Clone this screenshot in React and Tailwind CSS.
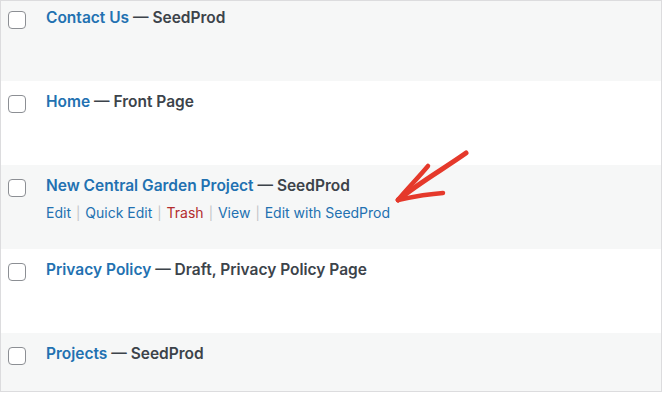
import React from "react";

// WordPress "Pages" list rows with a hand-drawn arrow pointing at the row actions

const rows = [
  { title: "Contact Us", state: "SeedProd", first: true },
  { title: "Home", state: "Front Page" },
  { title: "New Central Garden Project", state: "SeedProd", actions: true },
  { title: "Privacy Policy", state: "Draft, Privacy Policy Page" },
  { title: "Projects", state: "SeedProd", last: true },
];

function Sep() {
  return <span className="text-[#c3c4c7] text-[13px] mx-[5px]">|</span>;
}

function Row({ row, index }) {
  const bg = index % 2 === 0 ? "bg-[#f6f7f7]" : "bg-white";
  const height = row.first ? "h-[80px]" : row.last ? "h-[58px]" : "h-[84px]";
  const pad = row.first ? "pt-[7px]" : "pt-[11px]";
  return (
    <div className={`${bg} ${height} ${pad} flex`}>
      <div className="w-[45px] pl-[7px] pt-[3px] shrink-0">
        <div className="w-[18px] h-[18px] rounded-[4px] border border-[#8c8f94] bg-white" />
      </div>
      <div>
        <div className="text-[15.5px] leading-[20px] font-semibold text-[#3c434a]">
          <span className="text-[#2271b1]">{row.title}</span> — {row.state}
        </div>
        {row.actions && (
          <div className="text-[14px] leading-[20px] mt-[7px] text-[#2271b1]">
            <span>Edit</span>
            <Sep />
            <span>Quick Edit</span>
            <Sep />
            <span className="text-[#b32d2e]">Trash</span>
            <Sep />
            <span>View</span>
            <Sep />
            <span>Edit with SeedProd</span>
          </div>
        )}
      </div>
    </div>
  );
}

export default function App() {
  return (
    <div
      className="relative w-[662px] h-[393px] overflow-hidden bg-white"
      style={{ fontFamily: "Inter, Roboto, 'Noto Sans', sans-serif" }}
    >
      <div className="border-t border-l border-r border-b border-[#dcdcde] h-[392px] overflow-hidden">
        {rows.map((row, i) => (
          <Row key={row.title} row={row} index={i} />
        ))}
      </div>

      {/* hand-drawn arrow */}
      <svg
        className="absolute left-0 top-0 pointer-events-none"
        width="662"
        height="393"
        viewBox="0 0 662 393"
      >
        <g fill="none" stroke="#e5392b" strokeLinecap="round" strokeLinejoin="round">
          <path d="M466 153 C 445 168, 420 182, 398 200" strokeWidth="5" />
          <path d="M428 166 C 418 178, 406 190, 398 200" strokeWidth="4.5" />
          <path d="M398 200 C 412 197, 428 194, 443 193" strokeWidth="4.5" />
        </g>
      </svg>
    </div>
  );
}
